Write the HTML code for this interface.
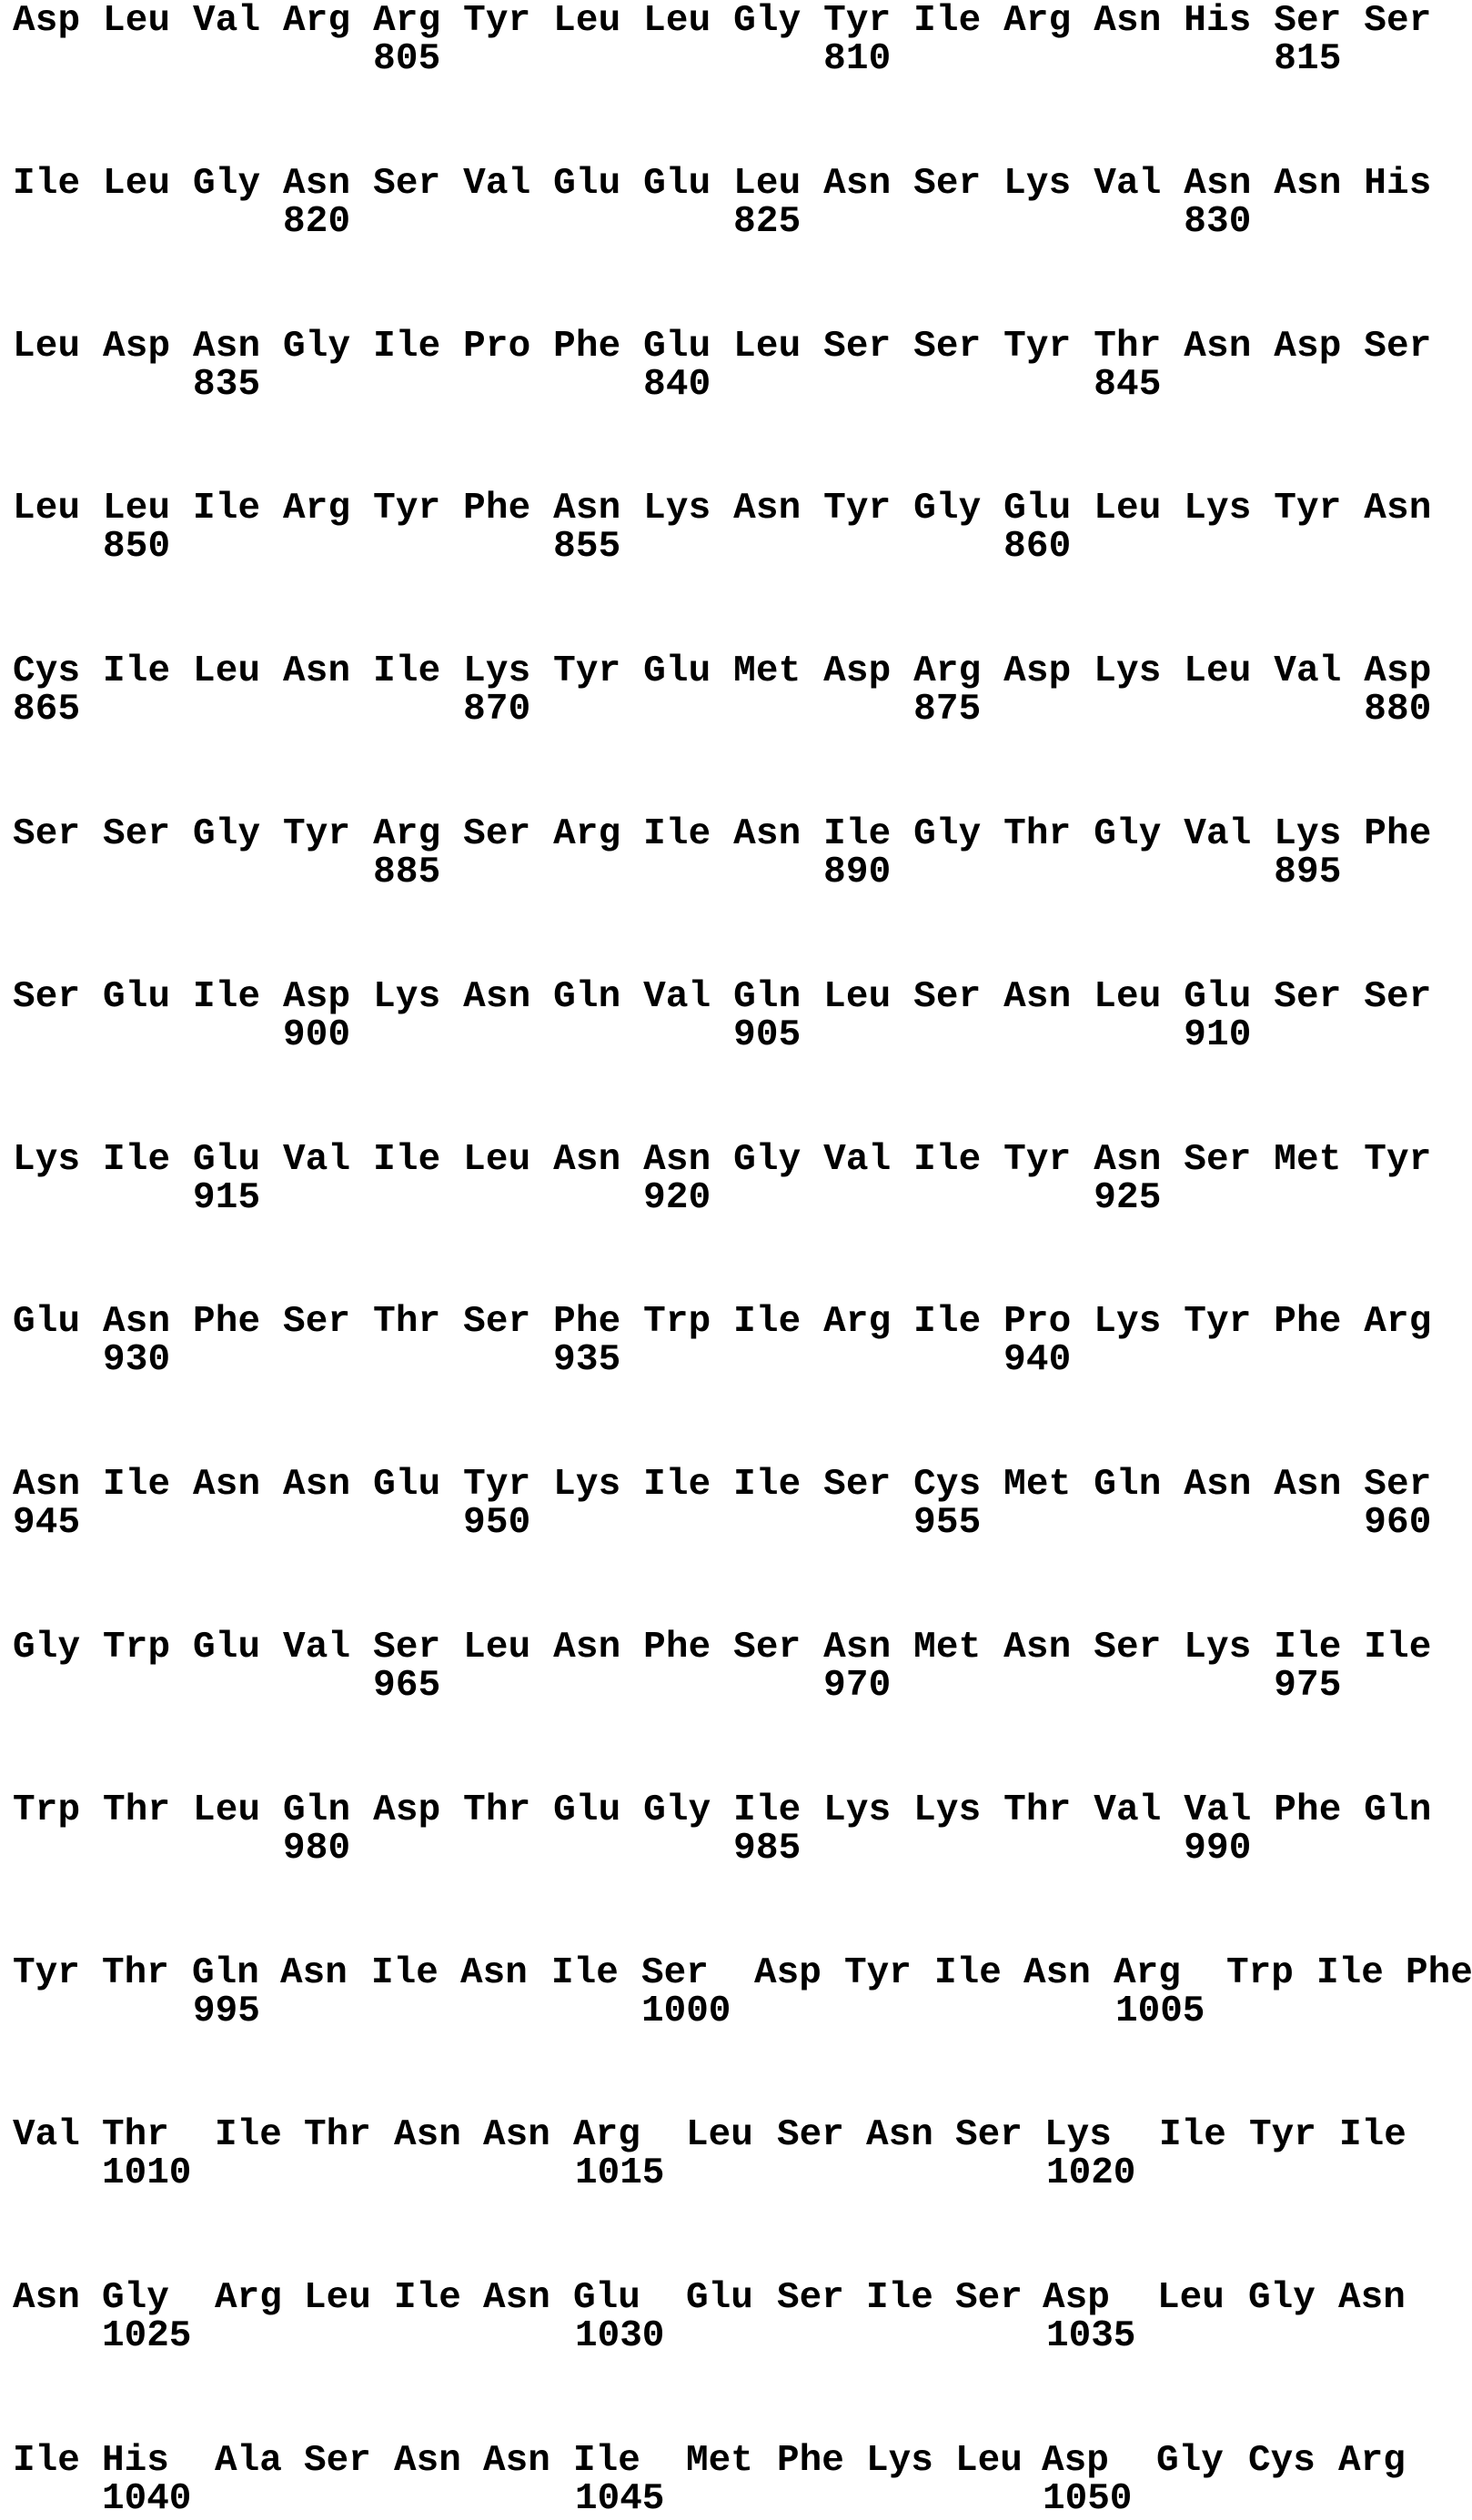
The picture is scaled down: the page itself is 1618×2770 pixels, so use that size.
<!DOCTYPE html>
<html><head><meta charset="utf-8"><style>
html,body{margin:0;padding:0;background:#fff;}
body{width:1618px;height:2752px;position:relative;overflow:hidden;font-family:"Liberation Mono","DejaVu Sans Mono",monospace;font-weight:bold;font-size:41px;color:#000;}
pre{position:absolute;left:14px;margin:0;font:inherit;line-height:41px;white-space:pre;letter-spacing:0.15px;}
.s{position:absolute;line-height:41px;white-space:pre;}
</style></head><body>
<pre style="top:3px">Asp Leu Val Arg Arg Tyr Leu Leu Gly Tyr Ile Arg Asn His Ser Ser</pre>
<pre style="top:45px">                805                 810                 815</pre>
<pre style="top:181.8px">Ile Leu Gly Asn Ser Val Glu Glu Leu Asn Ser Lys Val Asn Asn His</pre>
<pre style="top:223.8px">            820                 825                 830</pre>
<pre style="top:360.6px">Leu Asp Asn Gly Ile Pro Phe Glu Leu Ser Ser Tyr Thr Asn Asp Ser</pre>
<pre style="top:402.6px">        835                 840                 845</pre>
<pre style="top:539.4px">Leu Leu Ile Arg Tyr Phe Asn Lys Asn Tyr Gly Glu Leu Lys Tyr Asn</pre>
<pre style="top:581.4px">    850                 855                 860</pre>
<pre style="top:718.2px">Cys Ile Leu Asn Ile Lys Tyr Glu Met Asp Arg Asp Lys Leu Val Asp</pre>
<pre style="top:760.2px">865                 870                 875                 880</pre>
<pre style="top:897px">Ser Ser Gly Tyr Arg Ser Arg Ile Asn Ile Gly Thr Gly Val Lys Phe</pre>
<pre style="top:939px">                885                 890                 895</pre>
<pre style="top:1075.8px">Ser Glu Ile Asp Lys Asn Gln Val Gln Leu Ser Asn Leu Glu Ser Ser</pre>
<pre style="top:1117.8px">            900                 905                 910</pre>
<pre style="top:1254.6px">Lys Ile Glu Val Ile Leu Asn Asn Gly Val Ile Tyr Asn Ser Met Tyr</pre>
<pre style="top:1296.6px">        915                 920                 925</pre>
<pre style="top:1433.4px">Glu Asn Phe Ser Thr Ser Phe Trp Ile Arg Ile Pro Lys Tyr Phe Arg</pre>
<pre style="top:1475.4px">    930                 935                 940</pre>
<pre style="top:1612.2px">Asn Ile Asn Asn Glu Tyr Lys Ile Ile Ser Cys Met Gln Asn Asn Ser</pre>
<pre style="top:1654.2px">945                 950                 955                 960</pre>
<pre style="top:1791px">Gly Trp Glu Val Ser Leu Asn Phe Ser Asn Met Asn Ser Lys Ile Ile</pre>
<pre style="top:1833px">                965                 970                 975</pre>
<pre style="top:1969.8px">Trp Thr Leu Gln Asp Thr Glu Gly Ile Lys Lys Thr Val Val Phe Gln</pre>
<pre style="top:2011.8px">            980                 985                 990</pre>

<div class="s" style="top:2148.6px;left:14px">Tyr</div><div class="s" style="top:2148.6px;left:112px">Thr</div><div class="s" style="top:2148.6px;left:211px">Gln</div><div class="s" style="top:2148.6px;left:308px">Asn</div><div class="s" style="top:2148.6px;left:408px">Ile</div><div class="s" style="top:2148.6px;left:506px">Asn</div><div class="s" style="top:2148.6px;left:606px">Ile</div><div class="s" style="top:2148.6px;left:705px">Ser</div><div class="s" style="top:2148.6px;left:829px">Asp</div><div class="s" style="top:2148.6px;left:928px">Tyr</div><div class="s" style="top:2148.6px;left:1027px">Ile</div><div class="s" style="top:2148.6px;left:1125px">Asn</div><div class="s" style="top:2148.6px;left:1224px">Arg</div><div class="s" style="top:2148.6px;left:1348px">Trp</div><div class="s" style="top:2148.6px;left:1447px">Ile</div><div class="s" style="top:2148.6px;left:1545px">Phe</div>
<div class="s" style="top:2190.6px;left:212px">995</div><div class="s" style="top:2190.6px;left:705px">1000</div><div class="s" style="top:2190.6px;left:1226px">1005</div>

<div class="s" style="top:2327.4px;left:14px">Val</div><div class="s" style="top:2327.4px;left:112px">Thr</div><div class="s" style="top:2327.4px;left:236px">Ile</div><div class="s" style="top:2327.4px;left:334px">Thr</div><div class="s" style="top:2327.4px;left:433px">Asn</div><div class="s" style="top:2327.4px;left:531px">Asn</div><div class="s" style="top:2327.4px;left:630px">Arg</div><div class="s" style="top:2327.4px;left:754px">Leu</div><div class="s" style="top:2327.4px;left:854px">Ser</div><div class="s" style="top:2327.4px;left:952px">Asn</div><div class="s" style="top:2327.4px;left:1050px">Ser</div><div class="s" style="top:2327.4px;left:1148px">Lys</div><div class="s" style="top:2327.4px;left:1274px">Ile</div><div class="s" style="top:2327.4px;left:1373px">Tyr</div><div class="s" style="top:2327.4px;left:1472px">Ile</div>
<div class="s" style="top:2369.4px;left:112px">1010</div><div class="s" style="top:2369.4px;left:632px">1015</div><div class="s" style="top:2369.4px;left:1150px">1020</div>

<div class="s" style="top:2506.2px;left:14px">Asn</div><div class="s" style="top:2506.2px;left:112px">Gly</div><div class="s" style="top:2506.2px;left:236px">Arg</div><div class="s" style="top:2506.2px;left:334px">Leu</div><div class="s" style="top:2506.2px;left:433px">Ile</div><div class="s" style="top:2506.2px;left:531px">Asn</div><div class="s" style="top:2506.2px;left:630px">Glu</div><div class="s" style="top:2506.2px;left:754px">Glu</div><div class="s" style="top:2506.2px;left:854px">Ser</div><div class="s" style="top:2506.2px;left:952px">Ile</div><div class="s" style="top:2506.2px;left:1050px">Ser</div><div class="s" style="top:2506.2px;left:1146px">Asp</div><div class="s" style="top:2506.2px;left:1272px">Leu</div><div class="s" style="top:2506.2px;left:1372px">Gly</div><div class="s" style="top:2506.2px;left:1471px">Asn</div>
<div class="s" style="top:2548.2px;left:112px">1025</div><div class="s" style="top:2548.2px;left:632px">1030</div><div class="s" style="top:2548.2px;left:1150px">1035</div>

<div class="s" style="top:2685px;left:14px">Ile</div><div class="s" style="top:2685px;left:112px">His</div><div class="s" style="top:2685px;left:236px">Ala</div><div class="s" style="top:2685px;left:334px">Ser</div><div class="s" style="top:2685px;left:433px">Asn</div><div class="s" style="top:2685px;left:531px">Asn</div><div class="s" style="top:2685px;left:630px">Ile</div><div class="s" style="top:2685px;left:754px">Met</div><div class="s" style="top:2685px;left:854px">Phe</div><div class="s" style="top:2685px;left:952px">Lys</div><div class="s" style="top:2685px;left:1050px">Leu</div><div class="s" style="top:2685px;left:1145px">Asp</div><div class="s" style="top:2685px;left:1271px">Gly</div><div class="s" style="top:2685px;left:1372px">Cys</div><div class="s" style="top:2685px;left:1471px">Arg</div>
<div class="s" style="top:2727px;left:112px">1040</div><div class="s" style="top:2727px;left:632px">1045</div><div class="s" style="top:2727px;left:1146px">1050</div>
</body></html>
